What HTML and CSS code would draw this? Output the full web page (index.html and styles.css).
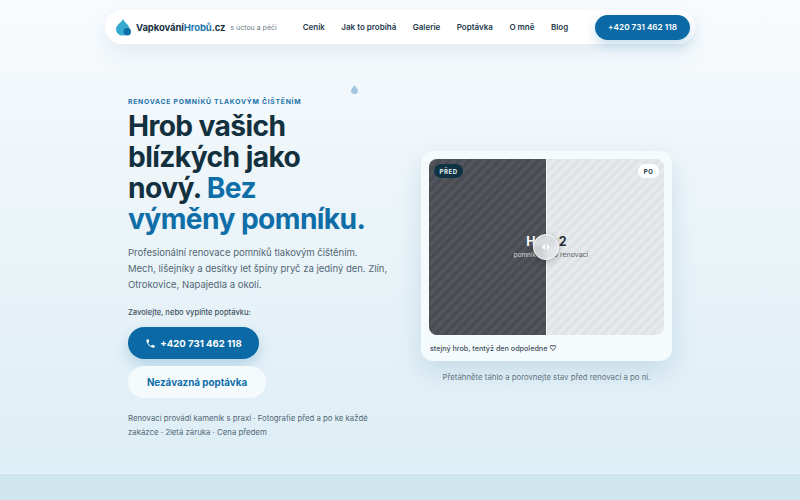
FILE: index.html
```html
<!DOCTYPE html>
<html lang="cs">
<head>
<meta charset="utf-8">
<title>VapkováníHrobů.cz</title>
<link rel="stylesheet" href="styles.css">
</head>
<body>
<header class="nav">
  <a class="brand">
    <svg class="brand-icon" width="16" height="17" viewBox="0 0 16 17"><path d="M7 0 C8.500 3.500 13.500 6 13.500 10 A6.700 6.500 0 0 1 0 10 C0 6 5.500 3.500 7 0Z" fill="#35a9cf"/><circle cx="11.300" cy="12.800" r="3.700" fill="#0b6ea8"/></svg>
    <span class="brand-name">Vapkování<em>Hrobů</em>.cz</span>
    <span class="brand-tag">s úctou a péčí</span>
  </a>
  <nav class="links">
    <a>Ceník</a><a>Jak to probíhá</a><a>Galerie</a><a>Poptávka</a><a>O mně</a><a>Blog</a>
  </nav>
  <a class="nav-call">+420 731 462 118</a>
</header>
<svg class="drop" width="7" height="9" viewBox="0 0 7 9"><path d="M3.500 0 C4.500 2 7 3.500 7 5.700 A3.500 3.300 0 0 1 0 5.700 C0 3.500 2.500 2 3.500 0Z" fill="#a3c8e0"/></svg>
<main class="hero">
  <section class="copy">
    <p class="eyebrow">Renovace pomníků tlakovým čištěním</p>
    <h1>Hrob vašich blízkých jako nový. <span class="accent">Bez</span> <span class="accent">výměny pomníku.</span></h1>
    <p class="lead">Profesionální renovace pomníků tlakovým čištěním.<br>Mech, lišejníky a desítky let špíny pryč za jediný den. Zlín, Otrokovice, Napajedla a okolí.</p>
    <p class="prompt">Zavolejte, nebo vyplňte poptávku:</p>
    <div class="actions">
      <a class="btn btn-primary">
        <svg width="11" height="11" viewBox="0 0 24 24"><path d="M6.600 10.800c1.400 2.800 3.800 5.100 6.600 6.600l2.200-2.200c.3-.3.700-.4 1-.2 1.100.4 2.300.6 3.600.6.600 0 1 .4 1 1V20c0 .6-.4 1-1 1C10.600 21 3 13.400 3 4c0-.6.400-1 1-1h3.500c.6 0 1 .4 1 1 0 1.300.2 2.500.6 3.600.1.300 0 .7-.2 1z" fill="#fff"/></svg>
        +420 731 462 118
      </a>
      <a class="btn btn-ghost">Nezávazná poptávka</a>
    </div>
    <p class="trust">Renovaci provádí kameník s praxí · Fotografie před a po ke každé zakázce · 2letá záruka · Cena předem</p>
  </section>
  <section class="visual">
    <figure class="card">
      <div class="compare">
        <div class="layer after">
          <strong>Hrob 2</strong>
          <small>pomník hned po renovací</small>
        </div>
        <div class="layer before">
          <strong>Hrob 2</strong>
          <small>pomník před renovací</small>
        </div>
        <span class="badge badge-before">PŘED</span>
        <span class="badge badge-after">PO</span>
        <span class="divider"></span>
        <span class="handle"><svg width="8" height="6" viewBox="0 0 8 6"><path d="M3 0 0 3l3 3zM5 0l3 3-3 3z" fill="#fff"/></svg></span>
      </div>
      <figcaption>stejný hrob, tentýž den odpoledne ♡</figcaption>
    </figure>
    <p class="hint">Přetáhněte táhlo a porovnejte stav před renovací a po ní.</p>
  </section>
</main>
<div class="next"></div>
</body>
</html>
```
FILE: styles.css
```css
* { box-sizing: border-box; }
html, body { margin: 0; height: 500px; overflow: hidden; }
body {
  position: relative;
  display: flex;
  flex-direction: column;
  font-family: Inter, "Noto Sans", sans-serif;
  color: #13303f;
  background: linear-gradient(180deg, #f8fbfe 0%, #eff6fa 30%, #dcedf5 100%);
}
.nav {
  flex: none;
  align-self: center;
  margin-top: 10px;
  width: 590px;
  height: 34px;
  display: flex;
  align-items: center;
  padding: 0 5px 0 11px;
  background: rgba(255,255,255,.92);
  border-radius: 17px;
  box-shadow: 0 8px 20px rgba(60,120,160,.1);
  white-space: nowrap;
}
.brand { display: flex; align-items: center; }
.brand-icon { margin-right: 4px; }
.brand-name { font-size: 9.500px; font-weight: 700; color: #17303f; letter-spacing: -.1px; }
.brand-name em { font-style: normal; color: #1b76ad; }
.brand-tag { margin-left: 5px; font-size: 7px; color: #6b7a85; }
.links { display: flex; gap: 16.500px; margin-left: 26px; font-size: 8px; font-weight: 600; color: #24394a; }
.nav-call {
  margin-left: auto;
  width: 95px;
  height: 25px;
  display: flex;
  align-items: center;
  justify-content: center;
  border-radius: 13px;
  background: #0b6aa5;
  color: #fff;
  font-size: 8.200px;
  font-weight: 600;
  box-shadow: 0 5px 12px rgba(11,106,165,.22);
}
.drop { position: absolute; left: 351px; top: 85px; }
.hero {
  flex: 1;
  width: 544px;
  align-self: center;
  display: grid;
  grid-template-columns: 270px 251px;
  justify-content: space-between;
  align-items: start;
  padding-top: 53px;
}
.eyebrow {
  margin: 0 0 5px;
  font-size: 6.800px;
  line-height: 9px;
  font-weight: 700;
  letter-spacing: .75px;
  text-transform: uppercase;
  color: #1b74aa;
}
h1 {
  margin: 0 0 10px;
  max-width: 239px;
  font-size: 28.200px;
  line-height: 31px;
  font-weight: 700;
  letter-spacing: -.6px;
  color: #13303f;
}
.accent { color: #0f6ea8; }
.lead { margin: 0 0 15px; font-size: 9.500px; line-height: 16px; color: #526775; }
.prompt { margin: 0 0 9px; font-size: 7.600px; line-height: 10px; font-weight: 500; color: #43525e; }
.actions { display: flex; flex-direction: column; align-items: flex-start; gap: 7px; }
.btn {
  display: flex;
  align-items: center;
  justify-content: center;
  height: 32px;
  border-radius: 16px;
  font-weight: 700;
}
.btn-primary { width: 131px; gap: 4px; font-size: 9.600px; background: #0b6aa5; color: #fff; box-shadow: 0 6px 14px rgba(11,106,165,.22); }
.btn-ghost { width: 138px; font-size: 9.800px; background: #f5fafd; color: #0f6ea8; }
.trust { margin: 13px 0 0; max-width: 264px; font-size: 7.800px; line-height: 14px; color: #526775; }
.visual { padding-top: 54px; }
.card {
  margin: 0;
  padding: 8px 8px 0;
  height: 210px;
  background: #f5fafd;
  border-radius: 12px;
  box-shadow: 0 10px 26px rgba(60,120,160,.18);
}
.compare { position: relative; height: 176px; border-radius: 8px; overflow: hidden; }
.layer {
  position: absolute;
  inset: 0;
  display: flex;
  flex-direction: column;
  align-items: center;
  justify-content: center;
}
.layer strong { font-size: 12.500px; font-weight: 700; line-height: 15px; }
.layer small { font-size: 7px; line-height: 12px; }
.after {
  background: repeating-linear-gradient(135deg, #dfe3e6 0 3.500px, #e7eaed 3.500px 7px);
  color: #2a3138;
}
.after small { color: #5a636b; }
.before {
  clip-path: inset(0 50% 0 0);
  background: repeating-linear-gradient(135deg, #494d53 0 3.500px, #52565c 3.500px 7px);
  color: #fff;
}
.before small { font-size: 6.400px; color: #d6dadd; }
.badge {
  position: absolute;
  top: 5px;
  height: 14px;
  padding: 0 5.500px;
  display: flex;
  align-items: center;
  border-radius: 7px;
  font-size: 6px;
  font-weight: 700;
  letter-spacing: .6px;
}
.badge-before { left: 5px; background: #0f3343; color: #e8f2f6; }
.badge-after { right: 5px; background: #fff; color: #13303f; }
.divider { position: absolute; left: 117px; top: 0; bottom: 0; width: 1px; background: #f2f5f7; }
.handle {
  position: absolute;
  left: 104px;
  top: 75px;
  width: 26px;
  height: 26px;
  display: flex;
  align-items: center;
  justify-content: center;
  border-radius: 50%;
  background: rgba(232,234,236,.8);
  backdrop-filter: blur(3px);
  border: 1.500px solid #f4f6f7;
  box-shadow: 0 2px 6px rgba(0,0,0,.25);
}
figcaption { margin-top: 8px; font-size: 7.200px; line-height: 11px; font-weight: 500; color: #43525e; padding-left: 1px; }
.hint { margin: 11px 0 0; text-align: center; font-size: 7.800px; line-height: 11px; color: #5f7482; }
.next {
  flex: none;
  height: 27px;
  background: #d0e6ef;
  border-top: 1px solid #e6f2f7;
}
```
